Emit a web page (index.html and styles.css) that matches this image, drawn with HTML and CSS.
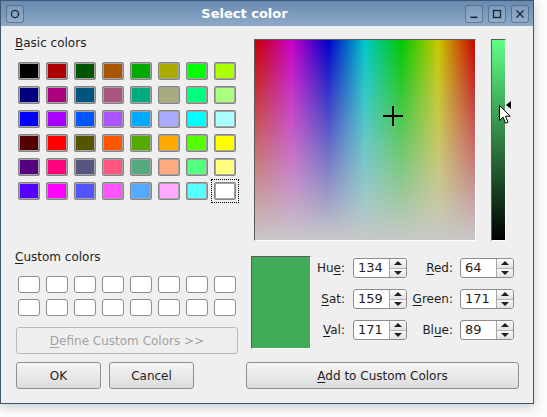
FILE: index.html
```html
<!DOCTYPE html>
<html>
<head>
<meta charset="utf-8">
<title>Select color</title>
<link rel="stylesheet" href="styles.css">
</head>
<body>
<div class="window">
  <div class="titlebar">
    <div class="tb-btn"><svg width="10" height="10" viewBox="0 0 10 10"><circle cx="5" cy="5" r="3.6" fill="none" stroke="#1f2b3b" stroke-width="1.4"/></svg></div>
    <div class="title">Select color</div>
    <div class="tb-right">
      <div class="tb-btn"><svg width="10" height="10" viewBox="0 0 10 10"><rect x="1.5" y="7.5" width="7" height="1.6" fill="#1f2b3b"/></svg></div>
      <div class="tb-btn"><svg width="10" height="10" viewBox="0 0 10 10"><rect x="1.5" y="1.5" width="7" height="7" fill="none" stroke="#1f2b3b" stroke-width="1.4"/></svg></div>
      <div class="tb-btn"><svg width="10" height="10" viewBox="0 0 10 10"><path d="M1.5 1.5 L8.5 8.5 M8.5 1.5 L1.5 8.5" stroke="#1f2b3b" stroke-width="1.4"/></svg></div>
    </div>
  </div>
  <div class="content">
    <div class="left">
      <div class="label"><u>B</u>asic colors</div>
      <div class="basic">
        <div class="cell"><span class="sw" style="background:#000000"></span></div>
        <div class="cell"><span class="sw" style="background:#00007f"></span></div>
        <div class="cell"><span class="sw" style="background:#0000ff"></span></div>
        <div class="cell"><span class="sw" style="background:#550000"></span></div>
        <div class="cell"><span class="sw" style="background:#55007f"></span></div>
        <div class="cell"><span class="sw" style="background:#5500ff"></span></div>
        <div class="cell"><span class="sw" style="background:#aa0000"></span></div>
        <div class="cell"><span class="sw" style="background:#aa007f"></span></div>
        <div class="cell"><span class="sw" style="background:#aa00ff"></span></div>
        <div class="cell"><span class="sw" style="background:#ff0000"></span></div>
        <div class="cell"><span class="sw" style="background:#ff007f"></span></div>
        <div class="cell"><span class="sw" style="background:#ff00ff"></span></div>
        <div class="cell"><span class="sw" style="background:#005500"></span></div>
        <div class="cell"><span class="sw" style="background:#00557f"></span></div>
        <div class="cell"><span class="sw" style="background:#0055ff"></span></div>
        <div class="cell"><span class="sw" style="background:#555500"></span></div>
        <div class="cell"><span class="sw" style="background:#55557f"></span></div>
        <div class="cell"><span class="sw" style="background:#5555ff"></span></div>
        <div class="cell"><span class="sw" style="background:#aa5500"></span></div>
        <div class="cell"><span class="sw" style="background:#aa557f"></span></div>
        <div class="cell"><span class="sw" style="background:#aa55ff"></span></div>
        <div class="cell"><span class="sw" style="background:#ff5500"></span></div>
        <div class="cell"><span class="sw" style="background:#ff557f"></span></div>
        <div class="cell"><span class="sw" style="background:#ff55ff"></span></div>
        <div class="cell"><span class="sw" style="background:#00aa00"></span></div>
        <div class="cell"><span class="sw" style="background:#00aa7f"></span></div>
        <div class="cell"><span class="sw" style="background:#00aaff"></span></div>
        <div class="cell"><span class="sw" style="background:#55aa00"></span></div>
        <div class="cell"><span class="sw" style="background:#55aa7f"></span></div>
        <div class="cell"><span class="sw" style="background:#55aaff"></span></div>
        <div class="cell"><span class="sw" style="background:#aaaa00"></span></div>
        <div class="cell"><span class="sw" style="background:#aaaa7f"></span></div>
        <div class="cell"><span class="sw" style="background:#aaaaff"></span></div>
        <div class="cell"><span class="sw" style="background:#ffaa00"></span></div>
        <div class="cell"><span class="sw" style="background:#ffaa7f"></span></div>
        <div class="cell"><span class="sw" style="background:#ffaaff"></span></div>
        <div class="cell"><span class="sw" style="background:#00ff00"></span></div>
        <div class="cell"><span class="sw" style="background:#00ff7f"></span></div>
        <div class="cell"><span class="sw" style="background:#00ffff"></span></div>
        <div class="cell"><span class="sw" style="background:#55ff00"></span></div>
        <div class="cell"><span class="sw" style="background:#55ff7f"></span></div>
        <div class="cell"><span class="sw" style="background:#55ffff"></span></div>
        <div class="cell"><span class="sw" style="background:#aaff00"></span></div>
        <div class="cell"><span class="sw" style="background:#aaff7f"></span></div>
        <div class="cell"><span class="sw" style="background:#aaffff"></span></div>
        <div class="cell"><span class="sw" style="background:#ffff00"></span></div>
        <div class="cell"><span class="sw" style="background:#ffff7f"></span></div>
        <div class="cell sel"><span class="sw" style="background:#ffffff"></span></div>
      </div>
      <div class="label custom-label"><u>C</u>ustom colors</div>
      <div class="custom">
        <span class="csw"></span><span class="csw"></span><span class="csw"></span><span class="csw"></span>
        <span class="csw"></span><span class="csw"></span><span class="csw"></span><span class="csw"></span>
        <span class="csw"></span><span class="csw"></span><span class="csw"></span><span class="csw"></span>
        <span class="csw"></span><span class="csw"></span><span class="csw"></span><span class="csw"></span>
      </div>
      <button class="btn define" disabled><u>D</u>efine Custom Colors &gt;&gt;</button>
      <div class="okrow">
        <button class="btn">OK</button>
        <button class="btn">Cancel</button>
      </div>
    </div>
    <div class="right">
      <div class="pickrow">
        <div class="picker">
          <div class="sat"></div>
          <div class="cross-h"></div>
          <div class="cross-v"></div>
        </div>
        <div class="lum"></div>
        <div class="lum-arrow"></div>
        <svg class="cursor" width="13" height="20" viewBox="0 0 13 20"><path d="M0.5 0.5 L0.5 15.5 L4 12 L6.6 18.2 L9 17.2 L6.5 11.2 L11.3 11.2 Z" fill="#fff" stroke="#000" stroke-width="1" stroke-linejoin="round"/></svg>
      </div>
      <div class="valrow">
        <div class="preview"></div>
        <div class="spins">
          <div class="lbl">Hu<u>e</u>:</div>
          <div class="spin"><span class="val">134</span><span class="arrows"><span class="up"></span><span class="dn"></span></span></div>
          <div class="lbl r"><u>R</u>ed:</div>
          <div class="spin"><span class="val">64</span><span class="arrows"><span class="up"></span><span class="dn"></span></span></div>
          <div class="lbl"><u>S</u>at:</div>
          <div class="spin"><span class="val">159</span><span class="arrows"><span class="up"></span><span class="dn"></span></span></div>
          <div class="lbl r"><u>G</u>reen:</div>
          <div class="spin"><span class="val">171</span><span class="arrows"><span class="up"></span><span class="dn"></span></span></div>
          <div class="lbl"><u>V</u>al:</div>
          <div class="spin"><span class="val">171</span><span class="arrows"><span class="up"></span><span class="dn"></span></span></div>
          <div class="lbl r">Bl<u>u</u>e:</div>
          <div class="spin"><span class="val">89</span><span class="arrows"><span class="up"></span><span class="dn"></span></span></div>
        </div>
      </div>
      <button class="btn add"><u>A</u>dd to Custom Colors</button>
    </div>
  </div>
</div>
</body>
</html>
```

FILE: styles.css
```css
* { box-sizing: border-box; }
html, body { margin: 0; padding: 0; }
body {
  background: #fbfbfb;
  width: 547px;
  height: 417px;
  overflow: hidden;
  font-family: "DejaVu Sans", sans-serif;
  font-size: 12px;
  color: #1e1e1e;
}
u { text-decoration-thickness: 1px; text-underline-offset: 2px; }

.window {
  width: 534px;
  height: 404px;
  border: 1px solid #3f5574;
  background: #efefef;
  box-shadow: 0 3px 10px rgba(0, 0, 0, 0.2);
  display: flex;
  flex-direction: column;
}

.titlebar {
  height: 25px;
  flex: none;
  background: linear-gradient(#698ab0, #8eaac8);
  display: flex;
  align-items: center;
  padding: 0 4px 0 5px;
}
.title {
  flex: 1;
  text-align: center;
  color: #fff;
  font-weight: bold;
  font-size: 13px;
}
.tb-right { display: flex; gap: 5px; }
.tb-btn {
  width: 18px;
  height: 18px;
  border: 1px solid rgba(40, 60, 90, 0.45);
  border-radius: 3px;
  background: rgba(255, 255, 255, 0.1);
  display: flex;
  align-items: center;
  justify-content: center;
}

.content {
  flex: 1;
  display: flex;
  gap: 7px;
  padding: 10px 0 0 14px;
}

.left { width: 224px; display: flex; flex-direction: column; }
.label { height: 14px; line-height: 14px; white-space: nowrap; }

.basic {
  margin-top: 9px;
  display: grid;
  grid-template-columns: repeat(8, 28px);
  grid-template-rows: repeat(6, 24px);
  grid-auto-flow: column;
}
.cell { display: flex; padding: 3px; }
.cell.sel { border: 1px dotted #000; padding: 2px; }
.sw {
  width: 22px;
  height: 18px;
  border: 1px solid #858585;
  border-radius: 2px;
  box-shadow: inset 0 0 0 1px #a4a4a4;
}

.custom-label { margin-top: 47px; }
.custom {
  margin: 12px 0 0 3px;
  display: grid;
  grid-template-columns: repeat(8, 22px);
  grid-auto-rows: 17px;
  gap: 6px;
}
.csw {
  background: #fff;
  border: 1px solid #8e8e8e;
  border-radius: 3px;
}

.btn {
  font: inherit;
  color: #1e1e1e;
  height: 27px;
  padding: 0;
  border: 1px solid #8f8f8f;
  border-radius: 3px;
  background: linear-gradient(#f6f6f6, #dcdcdc);
}
.define {
  margin: 11px 0 0 1px;
  width: 222px;
  color: #a2a2a2;
  background: #efefef;
  border-color: #bababa;
}
.okrow { margin: 8px 0 0 1px; display: flex; gap: 8px; }
.okrow .btn { width: 85px; }

.right { width: 273px; display: flex; flex-direction: column; }
.pickrow {
  margin-top: 3px;
  height: 202px;
  display: flex;
  position: relative;
}
.picker {
  margin-left: 8px;
  width: 222px;
  height: 202px;
  position: relative;
  border: 1px solid;
  border-color: #5b5b5b #fff #fff #5b5b5b;
  background: linear-gradient(90deg, #c80000, #c800c8 16.667%, #0000c8 33.333%, #00c8c8 50%, #00c800 66.667%, #c8c800 83.333%, #c80000);
}
.sat {
  position: absolute;
  inset: 0;
  background: linear-gradient(rgba(200, 200, 200, 0), #c8c8c8);
}
.cross-h { position: absolute; left: 128px; top: 75px; width: 20px; height: 2px; background: #000; }
.cross-v { position: absolute; left: 137px; top: 66px; width: 2px; height: 20px; background: #000; }

.lum {
  margin-left: 15px;
  width: 15px;
  height: 202px;
  border: 1px solid;
  border-color: #5b5b5b #fff #fff #5b5b5b;
  background: linear-gradient(#60ff85, #000);
}
.lum-arrow {
  margin-top: 62px;
  width: 0;
  height: 0;
  border-top: 4px solid transparent;
  border-bottom: 4px solid transparent;
  border-right: 5px solid #000;
}
.cursor { position: absolute; left: 253px; top: 66px; }

.valrow { margin-top: 15px; display: flex; }
.preview {
  margin-left: 5px;
  width: 60px;
  height: 93px;
  border: 1px solid;
  border-color: #5b5b5b #fff #fff #5b5b5b;
  background: #40ab59;
}
.spins {
  margin-top: 2px;
  display: grid;
  grid-template-columns: 42px 54px 53px 54px;
  grid-auto-rows: 20px;
  row-gap: 11px;
  align-self: flex-start;
}
.lbl { text-align: right; padding-right: 8px; line-height: 20px; white-space: nowrap; }
.lbl.r { padding-right: 7px; }
.spin {
  display: flex;
  border: 1px solid #8c8c8c;
  border-radius: 3px;
  background: #fff;
  overflow: hidden;
}
.val { flex: 1; padding-left: 4px; line-height: 18px; font-size: 13px; }
.arrows {
  width: 17px;
  display: flex;
  flex-direction: column;
  border-left: 1px solid #a6a6a6;
}
.arrows span {
  flex: 1;
  display: flex;
  align-items: center;
  justify-content: center;
  background: linear-gradient(#fafafa, #e2e2e2);
}
.arrows .dn { border-top: 1px solid #b4b4b4; }
.up::after {
  content: "";
  border-left: 4px solid transparent;
  border-right: 4px solid transparent;
  border-bottom: 4px solid #1e1e1e;
}
.dn::after {
  content: "";
  border-left: 4px solid transparent;
  border-right: 4px solid transparent;
  border-top: 4px solid #1e1e1e;
}

.add { margin-top: 13px; width: 273px; }
```
